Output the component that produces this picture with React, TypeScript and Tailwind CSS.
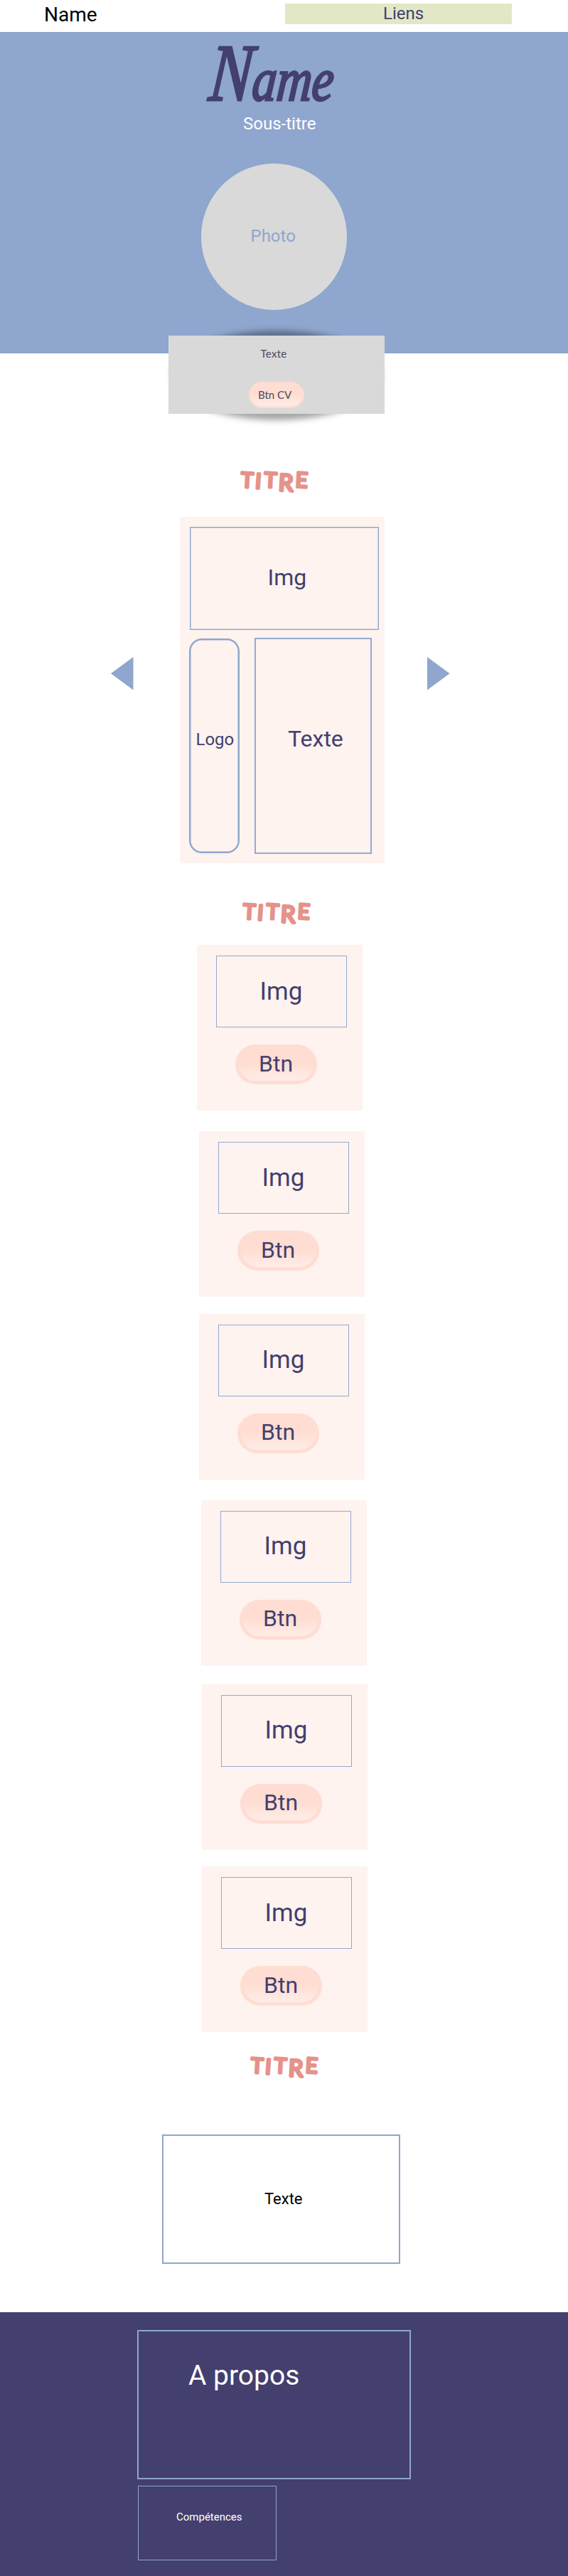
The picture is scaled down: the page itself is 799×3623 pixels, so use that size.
import React from "react";

const SectionTitle = ({ className = "" }: { className?: string }) => (
  <h2 className={className}>
    <svg width="104" height="40" viewBox="0 0 104 40" className="block overflow-visible">
      <text
        x="4.5 24.6 37.3 57.2 81.2"
        y="25.3 26.7 25.3 30 25"
        rotate="3 4 3 3 3"
        fill="#e5928b"
        stroke="#e5928b"
        strokeWidth="3.6"
        strokeLinejoin="round"
        strokeLinecap="round"
        fontFamily="Lato, sans-serif"
        fontWeight="400"
        fontSize="29.5"
      >
        TIT<tspan fontSize="33">R</tspan>E
      </text>
    </svg>
  </h2>
);

const Arrow = ({ flip = false }: { flip?: boolean }) => (
  <button aria-label={flip ? "Suivant" : "Précédent"} className="mt-[197px] block h-[47px] w-8">
    <svg width="32" height="47" viewBox="0 0 32 47" className="block">
      <path d={flip ? "M0 0 L31.5 23.3 L0 46.6Z" : "M31.5 0 L0 23.3 L31.5 46.6Z"} fill="#8fa6ce" />
    </svg>
  </button>
);

const ProjectCard = ({ className }: { className: string }) => (
  <article className={`h-[233px] w-[233px] bg-[#fef3ee] pl-[27px] pt-[15px] text-[#433f6e] ${className}`}>
    <div className="h-[101px] w-[184px] border border-[#94aad0] pl-[60.5px] pt-[31.5px] text-[35px] leading-none">
      Img
    </div>
    <button className="ml-[27px] mt-6 flex h-14 w-[115px] rounded-full bg-[#ffddd2] px-[5px] pb-[5px] pt-[5px]">
      <span className="block h-full w-full rounded-full bg-linear-to-b from-[#ffddd2] from-45% to-[#ffede7] pl-[28px] pt-[5.5px] text-left text-[32px] leading-none">
        Btn
      </span>
    </button>
  </article>
);

export default function App() {
  return (
    <div className="min-h-[3623px] w-full overflow-hidden bg-white font-['Roboto',sans-serif]">
      <header className="flex h-[44.5px] pl-[62px]">
        <div className="w-[339px] pt-[7px] text-[28px] leading-none text-black">Name</div>
        <nav className="mt-[5px] h-[29px] w-[319px] bg-[#e2e8c6] pl-[138px] pt-[2px] text-[24px] leading-none text-[#433f6e]">
          Liens
        </nav>
      </header>

      <section className="h-[452.5px] bg-[#8fa6ce]">
        <h1 className="h-[117px] pl-[290px] pt-[3px] text-[#433f6e]">
          <span className="inline-block origin-bottom-left scale-x-[0.8] -skew-x-6 font-['Liberation_Serif',serif] text-[86px] font-normal italic leading-[110px] [-webkit-text-stroke:3px_#433f6e] first-letter:text-[114px] first-letter:leading-[110px]">
            Name
          </span>
        </h1>
        <p className="pl-[342px] text-[24px] leading-none text-white">Sous-titre</p>
        <div className="ml-[283px] mt-[44.5px] h-[205.5px] w-[205px] rounded-full bg-[#d9d9d9] pl-[69.5px] pt-[89.8px] text-[24px] leading-none text-[#8fa6ce]">
          Photo
        </div>
        <div className="relative ml-[237px] mt-9 h-[110px] w-[304px]">
          <div className="absolute -top-[7px] left-[4px] h-[126px] w-[296px] rounded-[50%] bg-black/35 blur-[4px]" />
          <div className="relative h-full w-full bg-[#d9d9d9] pt-[18.5px] font-['Lato',sans-serif] text-[#4b4a58]">
            <p className="pl-[129.5px] text-[15px] leading-[15px] tracking-[0.3px]">Texte</p>
            <button className="ml-[112.5px] mt-[31.5px] flex h-[37px] w-[78.5px] rounded-full bg-[#ffddd2] px-[3px] pb-[3px] pt-[3px]">
              <span className="block h-full w-full whitespace-nowrap rounded-full bg-linear-to-b from-[#ffddd2] from-45% to-[#ffede7] pl-[10.5px] pt-[8px] text-left text-[15px] leading-[15px]">
                Btn CV
              </span>
            </button>
          </div>
        </div>
      </section>

      <section className="h-[759px]">
        <SectionTitle className="pl-[334px] pt-[163px]" />
        <div className="mt-[27px] flex pl-[156px]">
          <Arrow />
          <div className="ml-[65px] mr-[59.5px] h-[486.5px] w-[288px] bg-[#fef3ee] pl-[13px] pt-[14px] text-[#433f6e]">
            <div className="ml-px h-[145px] w-[266px] border border-[#8fa6ce] pl-[108.5px] pt-[54px] text-[32px] leading-none shadow-[inset_0_0_0_1px_#c9d1e3]">
              Img
            </div>
            <div className="mt-[11px] flex">
              <div className="mt-px h-[302px] w-[71px] rounded-[18px] border-[2.5px] border-[#8fa6ce] pl-[7.5px] pt-[128px] text-[24px] leading-none shadow-[inset_0_0_0_0.5px_#8fa6ce]">
                Logo
              </div>
              <div className="ml-[20.5px] h-[304px] w-[165.5px] border-2 border-[#94aad0] pl-[45.5px] pt-[123.5px] text-[32px] leading-none">
                Texte
              </div>
            </div>
          </div>
          <Arrow flip />
        </div>
      </section>

      <section className="h-[1620px]">
        <SectionTitle className="pl-[337px] pt-[11px]" />
        <div className="pt-[22px]">
          <ProjectCard className="ml-[277px]" />
          <ProjectCard className="ml-[280px] mt-[29px]" />
          <ProjectCard className="ml-[280px] mt-[23.5px]" />
          <ProjectCard className="ml-[283px] mt-[29px]" />
          <ProjectCard className="ml-[284px] mt-[26px]" />
          <ProjectCard className="ml-[284px] mt-[23.5px]" />
        </div>
      </section>

      <section className="h-[376px]">
        <SectionTitle className="pl-[348px] pt-[14px]" />
        <div className="ml-[228px] mt-[72px] h-[182px] w-[335px] border-2 border-[#8fa6ce] pl-[142px] pt-[78px] text-[22px] leading-none text-black">
          Texte
        </div>
      </section>

      <footer className="h-[371px] bg-[#433f6e] pl-[193px] pt-[24.5px] text-white">
        <div className="h-[210.5px] w-[385px] border-2 border-[#8fa6ce] pl-[70px] pt-[43.5px] text-[39px] leading-none">
          A propos
        </div>
        <div className="ml-px mt-[9px] h-[105px] w-[195px] border border-[#8fa6ce] pl-[53px] pt-[35.5px] text-[15px] leading-none">
          Compétences
        </div>
      </footer>
    </div>
  );
}
